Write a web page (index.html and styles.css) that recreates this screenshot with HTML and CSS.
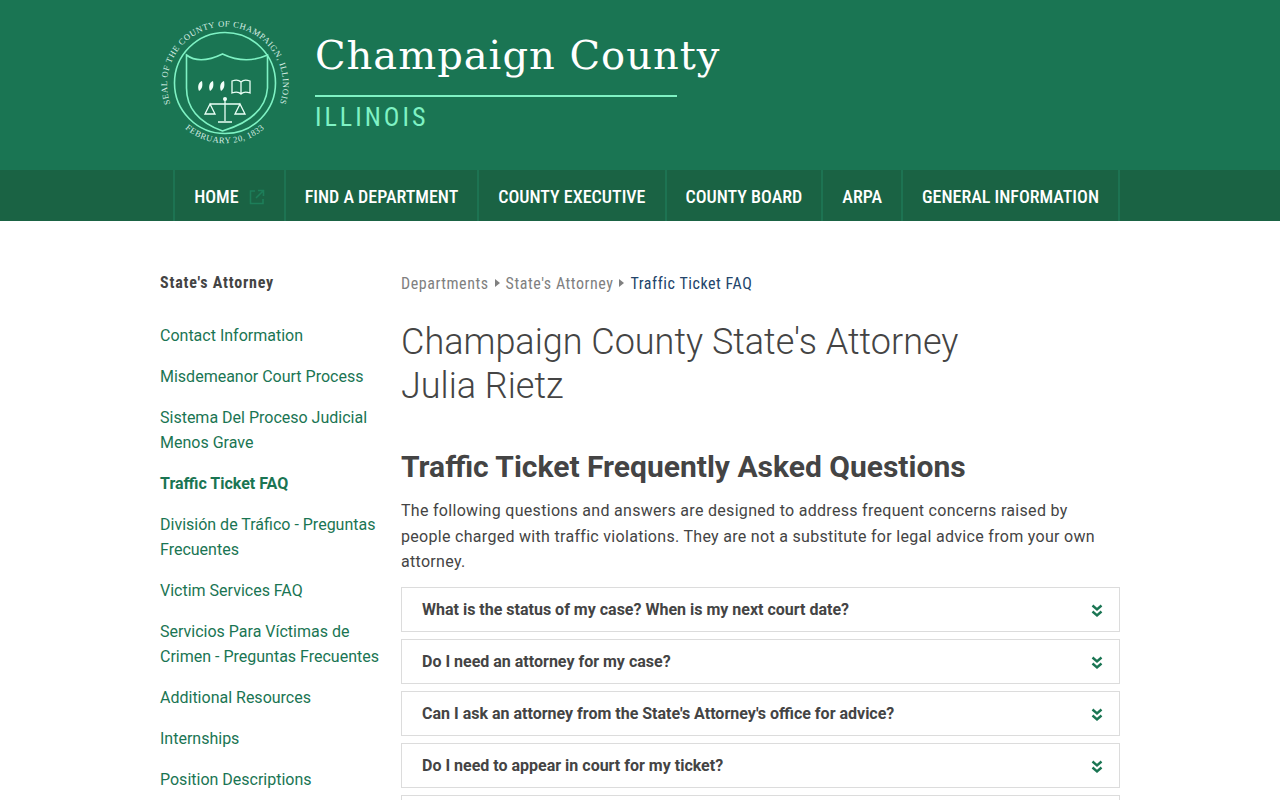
FILE: index.html
```html
<!DOCTYPE html>
<html lang="en">
<head>
<meta charset="utf-8">
<title>Traffic Ticket FAQ - Champaign County State's Attorney</title>
<link rel="stylesheet" href="styles.css">
</head>
<body>
<header class="site-header">
  <div class="wrap brand">
    <svg class="seal" width="130" height="130" viewBox="0 0 130 130" aria-label="Seal of the County of Champaign, Illinois">
      <defs>
        <path id="arc-top" d="M10 85 A58 58 0 1 1 120 85"/>
        <path id="arc-bottom" d="M27 112 A61 61 0 0 0 103 112"/>
      </defs>
      <text class="seal-text"><textPath href="#arc-top" startOffset="50%" text-anchor="middle">SEAL OF THE COUNTY OF CHAMPAIGN, ILLINOIS</textPath></text>
      <text class="seal-text"><textPath href="#arc-bottom" startOffset="50%" text-anchor="middle">FEBRUARY 20, 1833</textPath></text>
      <circle class="seal-line" cx="65" cy="65" r="50.5"/>
      <path class="seal-line" d="M29 37 Q42 47 65 36 Q88 47 110 37 L110 70 Q108 100 65 113 Q29 100 29 70 Z" transform="translate(-2.5 0)"/>
      <g class="seal-white">
        <path d="M41 71c3-2 4-5 3-10-3 1-5 5-3 10z M52 71c3-2 4-5 3-10-3 1-5 5-3 10z M63 71c3-2 4-5 3-10-3 1-5 5-3 10z" transform="translate(-2 2)"/>
        <path d="M63 116h10v1H63z" opacity="0"/>
      </g>
      <path class="seal-thin" d="M72 63 q6-2 9 1 q3-3 9-1 v12 q-6-2-9 1 q-3-3-9-1z M81 64v12"/>
      <path class="seal-thin" d="M65 82 v21 M50 86 h30 M50 86 l-5 10 h10z M80 86 l-5 10 h10z M58 104 h14"/>
      <circle class="seal-dot" cx="65" cy="81" r="2"/>
    </svg>
    <div class="brand-text">
      <div class="brand-name">Champaign County</div>
      <div class="brand-state">ILLINOIS</div>
    </div>
  </div>
</header>
<nav class="site-nav">
  <ul class="wrap nav-list">
    <li class="nav-item"><a class="nav-link" href="#">HOME
      <svg class="ext-icon" width="16" height="16" viewBox="0 0 16 16"><path d="M6 2H1.5v12.5H14V10M9 1.5h5.5V7M14 2L7 9" fill="none" stroke="currentColor" stroke-width="1.6"/></svg></a></li>
    <li class="nav-item"><a class="nav-link" href="#">FIND A DEPARTMENT</a></li>
    <li class="nav-item"><a class="nav-link" href="#">COUNTY EXECUTIVE</a></li>
    <li class="nav-item"><a class="nav-link" href="#">COUNTY BOARD</a></li>
    <li class="nav-item"><a class="nav-link" href="#">ARPA</a></li>
    <li class="nav-item"><a class="nav-link" href="#">GENERAL INFORMATION</a></li>
  </ul>
</nav>
<div class="wrap page">
  <aside class="sidebar">
    <h2 class="side-title">State's Attorney</h2>
    <ul class="side-list">
      <li><a href="#">Contact Information</a></li>
      <li><a href="#">Misdemeanor Court Process</a></li>
      <li><a href="#">Sistema Del Proceso Judicial Menos Grave</a></li>
      <li><a class="current" href="#">Traffic Ticket FAQ</a></li>
      <li><a href="#">División de Tráfico - Preguntas Frecuentes</a></li>
      <li><a href="#">Victim Services FAQ</a></li>
      <li><a href="#">Servicios Para Víctimas de Crimen - Preguntas Frecuentes</a></li>
      <li><a href="#">Additional Resources</a></li>
      <li><a href="#">Internships</a></li>
      <li><a href="#">Position Descriptions</a></li>
    </ul>
  </aside>
  <main class="main">
    <ol class="crumbs">
      <li><a href="#">Departments</a></li>
      <li class="sep"></li>
      <li><a href="#">State's Attorney</a></li>
      <li class="sep"></li>
      <li class="crumb-current">Traffic Ticket FAQ</li>
    </ol>
    <h1 class="page-title">Champaign County State's Attorney<br>Julia Rietz</h1>
    <h2 class="section-title">Traffic Ticket Frequently Asked Questions</h2>
    <p class="intro">The following questions and answers are designed to address frequent concerns raised by people charged with traffic violations. They are not a substitute for legal advice from your own attorney.</p>
    <div class="faq">
      <div class="faq-row"><span>What is the status of my case? When is my next court date?</span><svg class="chev" width="12" height="14" viewBox="0 0 12 14"><path d="M1.5 1.5L6 5.5l4.5-4M1.5 7.5L6 11.5l4.5-4" fill="none" stroke="currentColor" stroke-width="2.4"/></svg></div>
      <div class="faq-row"><span>Do I need an attorney for my case?</span><svg class="chev" width="12" height="14" viewBox="0 0 12 14"><path d="M1.5 1.5L6 5.5l4.5-4M1.5 7.5L6 11.5l4.5-4" fill="none" stroke="currentColor" stroke-width="2.4"/></svg></div>
      <div class="faq-row"><span>Can I ask an attorney from the State's Attorney's office for advice?</span><svg class="chev" width="12" height="14" viewBox="0 0 12 14"><path d="M1.5 1.5L6 5.5l4.5-4M1.5 7.5L6 11.5l4.5-4" fill="none" stroke="currentColor" stroke-width="2.4"/></svg></div>
      <div class="faq-row"><span>Do I need to appear in court for my ticket?</span><svg class="chev" width="12" height="14" viewBox="0 0 12 14"><path d="M1.5 1.5L6 5.5l4.5-4M1.5 7.5L6 11.5l4.5-4" fill="none" stroke="currentColor" stroke-width="2.4"/></svg></div>
      <div class="faq-row"><span>What happens if I do not appear?</span><svg class="chev" width="12" height="14" viewBox="0 0 12 14"><path d="M1.5 1.5L6 5.5l4.5-4M1.5 7.5L6 11.5l4.5-4" fill="none" stroke="currentColor" stroke-width="2.4"/></svg></div>
    </div>
  </main>
</div>
</body>
</html>
```
FILE: styles.css
```css
* { box-sizing: border-box; }
html, body { margin: 0; padding: 0; }
body { font-family: Roboto, "Liberation Sans", sans-serif; font-size: 16px; color: #444; background: #fff; height: 800px; overflow: hidden; }
a { color: inherit; text-decoration: none; }
ul, ol { list-style: none; margin: 0; padding: 0; }
.wrap { width: 960px; margin: 0 auto; }

.site-header { background: #1a7553; height: 170px; }
.brand { display: flex; align-items: flex-start; height: 170px; padding-top: 18px; }
.seal { flex: none; display: block; }
.seal-text { font-family: "Liberation Serif", serif; font-size: 8.6px; letter-spacing: 0.55px; fill: #d8efe5; }
.seal-line { fill: none; stroke: #7ff2c4; stroke-width: 1.6; }
.seal-thin { fill: none; stroke: #eafff6; stroke-width: 1.3; }
.seal-white, .seal-dot { fill: #f2fff9; }
.brand-text { margin-left: 25px; width: 362px; padding-top: 12px; }
.brand-name { font-family: "Roboto Slab", "DejaVu Serif", serif; font-weight: 300; font-size: 40px; line-height: 50px; letter-spacing: 1px; color: #fff; padding-bottom: 15px; border-bottom: 2px solid #7ff2c4; white-space: nowrap; }
.brand-state { font-family: "Roboto Condensed", Roboto, sans-serif; font-size: 26px; line-height: 40px; letter-spacing: 3px; color: #7ff2c4; }

.site-nav { background: #1a6344; height: 51px; }
.nav-list { display: flex; justify-content: flex-end; height: 51px; padding-top: 0; }
.nav-item { border-left: 2px solid #1d7352; height: 51px; }
.nav-item:last-child { border-right: 2px solid #1d7352; }
.nav-link { display: flex; align-items: center; height: 51px; padding: 2px 19px 0; font-family: "Roboto Condensed", Roboto, sans-serif; font-weight: 500; font-size: 18px; color: #fff; white-space: nowrap; }
.ext-icon { color: #1d7e59; margin-left: 10px; }

.page { display: flex; padding-top: 51px; }
.sidebar { width: 241px; flex: none; padding-right: 20px; }
.side-title { margin: 0 0 29px; font-family: "Roboto Condensed", Roboto, sans-serif; font-size: 16px; line-height: 22px; font-weight: 700; letter-spacing: 0.8px; color: #444; }
.side-list li { margin-bottom: 16px; line-height: 25px; color: #1a7553; }
.side-list .current { font-weight: 700; }
.main { width: 719px; flex: none; }
.crumbs { display: flex; align-items: center; height: 22px; font-family: "Roboto Condensed", Roboto, sans-serif; font-size: 16px; letter-spacing: 0.55px; color: #808080; }
.sep { width: 0; height: 0; border-left: 5px solid #808080; border-top: 4px solid transparent; border-bottom: 4px solid transparent; margin: 0 6px; }
.crumb-current { color: #23456b; }
.page-title { margin: 26px 0 0; font-weight: 300; font-size: 36px; line-height: 44px; color: #444; }
.section-title { margin: 37px 0 0; font-size: 30px; line-height: 44px; font-weight: 700; color: #444; }
.intro { margin: 9px 0 0; line-height: 25.5px; letter-spacing: 0.3px; color: #444; }
.faq { margin-top: 12px; display: flex; flex-direction: column; gap: 7px; }
.faq-row { display: flex; align-items: center; justify-content: space-between; height: 45px; border: 1px solid #dcdcdc; padding: 0 16px 0 20px; font-weight: 700; color: #444; }
.chev { color: #1a7553; margin-top: 4px; }
```
